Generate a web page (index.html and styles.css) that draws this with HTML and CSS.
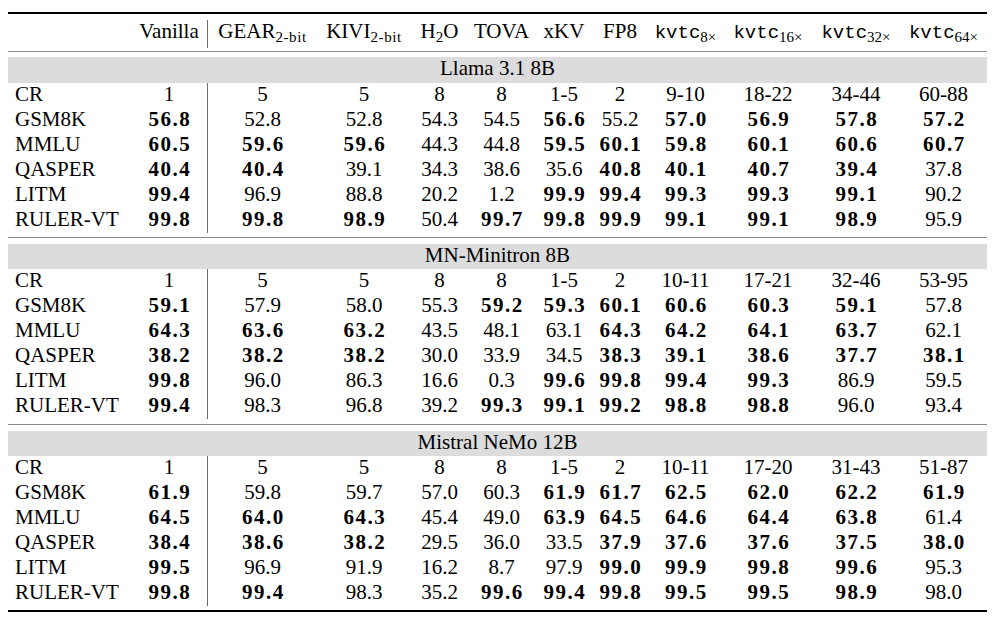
FILE: index.html
```html
<!DOCTYPE html>
<html>
<head>
<meta charset="utf-8">
<link rel="stylesheet" href="styles.css">
</head>
<body>
<table class="results">
  <colgroup>
    <col class="c-label"><col class="c-van"><col class="c-gear"><col class="c-kivi"><col class="c-h2o"><col class="c-tova"><col class="c-xkv"><col class="c-fp8"><col class="c-k8"><col class="c-k16"><col class="c-k32"><col class="c-k64">
  </colgroup>
  <thead>
    <tr class="gap g6"><td colspan="12"></td></tr>
    <tr class="head">
      <th></th>
      <th>Vanilla</th>
      <th class="sep">GEAR<sub>2-bit</sub></th>
      <th>KIVI<sub>2-bit</sub></th>
      <th>H<sub class="num">2</sub>O</th>
      <th>TOVA</th>
      <th>xKV</th>
      <th>FP8</th>
      <th><span class="tt">kvtc</span><sub class="num">8×</sub></th>
      <th><span class="tt">kvtc</span><sub class="num">16×</sub></th>
      <th><span class="tt">kvtc</span><sub class="num">32×</sub></th>
      <th><span class="tt">kvtc</span><sub class="num">64×</sub></th>
    </tr>
    <tr class="gap g3 rule"><td colspan="12"></td></tr>
  </thead>
  <tbody>
    <tr class="gap g5"><td colspan="12"></td></tr>
    <tr class="band b26"><td colspan="12">Llama 3.1 8B</td></tr>
    <tr><td class="lbl">CR</td><td>1</td><td class="sep">5</td><td>5</td><td>8</td><td>8</td><td>1-5</td><td>2</td><td>9-10</td><td>18-22</td><td>34-44</td><td>60-88</td></tr>
    <tr><td class="lbl">GSM8K</td><td class="b">56.8</td><td class="sep">52.8</td><td>52.8</td><td>54.3</td><td>54.5</td><td class="b">56.6</td><td>55.2</td><td class="b">57.0</td><td class="b">56.9</td><td class="b">57.8</td><td class="b">57.2</td></tr>
    <tr><td class="lbl">MMLU</td><td class="b">60.5</td><td class="sep b">59.6</td><td class="b">59.6</td><td>44.3</td><td>44.8</td><td class="b">59.5</td><td class="b">60.1</td><td class="b">59.8</td><td class="b">60.1</td><td class="b">60.6</td><td class="b">60.7</td></tr>
    <tr><td class="lbl">QASPER</td><td class="b">40.4</td><td class="sep b">40.4</td><td>39.1</td><td>34.3</td><td>38.6</td><td>35.6</td><td class="b">40.8</td><td class="b">40.1</td><td class="b">40.7</td><td class="b">39.4</td><td>37.8</td></tr>
    <tr><td class="lbl">LITM</td><td class="b">99.4</td><td class="sep">96.9</td><td>88.8</td><td>20.2</td><td>1.2</td><td class="b">99.9</td><td class="b">99.4</td><td class="b">99.3</td><td class="b">99.3</td><td class="b">99.1</td><td>90.2</td></tr>
    <tr><td class="lbl">RULER-VT</td><td class="b">99.8</td><td class="sep b">99.8</td><td class="b">98.9</td><td>50.4</td><td class="b">99.7</td><td class="b">99.8</td><td class="b">99.9</td><td class="b">99.1</td><td class="b">99.1</td><td class="b">98.9</td><td>95.9</td></tr>
    <tr class="gap g4 rule"><td colspan="12"></td></tr>
  </tbody>
  <tbody>
    <tr class="gap g6"><td colspan="12"></td></tr>
    <tr class="band"><td colspan="12">MN-Minitron 8B</td></tr>
    <tr><td class="lbl">CR</td><td>1</td><td class="sep">5</td><td>5</td><td>8</td><td>8</td><td>1-5</td><td>2</td><td>10-11</td><td>17-21</td><td>32-46</td><td>53-95</td></tr>
    <tr><td class="lbl">GSM8K</td><td class="b">59.1</td><td class="sep">57.9</td><td>58.0</td><td>55.3</td><td class="b">59.2</td><td class="b">59.3</td><td class="b">60.1</td><td class="b">60.6</td><td class="b">60.3</td><td class="b">59.1</td><td>57.8</td></tr>
    <tr><td class="lbl">MMLU</td><td class="b">64.3</td><td class="sep b">63.6</td><td class="b">63.2</td><td>43.5</td><td>48.1</td><td>63.1</td><td class="b">64.3</td><td class="b">64.2</td><td class="b">64.1</td><td class="b">63.7</td><td>62.1</td></tr>
    <tr><td class="lbl">QASPER</td><td class="b">38.2</td><td class="sep b">38.2</td><td class="b">38.2</td><td>30.0</td><td>33.9</td><td>34.5</td><td class="b">38.3</td><td class="b">39.1</td><td class="b">38.6</td><td class="b">37.7</td><td class="b">38.1</td></tr>
    <tr><td class="lbl">LITM</td><td class="b">99.8</td><td class="sep">96.0</td><td>86.3</td><td>16.6</td><td>0.3</td><td class="b">99.6</td><td class="b">99.8</td><td class="b">99.4</td><td class="b">99.3</td><td>86.9</td><td>59.5</td></tr>
    <tr><td class="lbl">RULER-VT</td><td class="b">99.4</td><td class="sep">98.3</td><td>96.8</td><td>39.2</td><td class="b">99.3</td><td class="b">99.1</td><td class="b">99.2</td><td class="b">98.8</td><td class="b">98.8</td><td>96.0</td><td>93.4</td></tr>
    <tr class="gap g5 rule"><td colspan="12"></td></tr>
  </tbody>
  <tbody>
    <tr class="gap g6"><td colspan="12"></td></tr>
    <tr class="band"><td colspan="12">Mistral NeMo 12B</td></tr>
    <tr><td class="lbl">CR</td><td>1</td><td class="sep">5</td><td>5</td><td>8</td><td>8</td><td>1-5</td><td>2</td><td>10-11</td><td>17-20</td><td>31-43</td><td>51-87</td></tr>
    <tr><td class="lbl">GSM8K</td><td class="b">61.9</td><td class="sep">59.8</td><td>59.7</td><td>57.0</td><td>60.3</td><td class="b">61.9</td><td class="b">61.7</td><td class="b">62.5</td><td class="b">62.0</td><td class="b">62.2</td><td class="b">61.9</td></tr>
    <tr><td class="lbl">MMLU</td><td class="b">64.5</td><td class="sep b">64.0</td><td class="b">64.3</td><td>45.4</td><td>49.0</td><td class="b">63.9</td><td class="b">64.5</td><td class="b">64.6</td><td class="b">64.4</td><td class="b">63.8</td><td>61.4</td></tr>
    <tr><td class="lbl">QASPER</td><td class="b">38.4</td><td class="sep b">38.6</td><td class="b">38.2</td><td>29.5</td><td>36.0</td><td>33.5</td><td class="b">37.9</td><td class="b">37.6</td><td class="b">37.6</td><td class="b">37.5</td><td class="b">38.0</td></tr>
    <tr><td class="lbl">LITM</td><td class="b">99.5</td><td class="sep">96.9</td><td>91.9</td><td>16.2</td><td>8.7</td><td>97.9</td><td class="b">99.0</td><td class="b">99.9</td><td class="b">99.8</td><td class="b">99.6</td><td>95.3</td></tr>
    <tr><td class="lbl">RULER-VT</td><td class="b">99.8</td><td class="sep b">99.4</td><td>98.3</td><td>35.2</td><td class="b">99.6</td><td class="b">99.4</td><td class="b">99.8</td><td class="b">99.5</td><td class="b">99.5</td><td class="b">98.9</td><td>98.0</td></tr>
    <tr class="gap g4"><td colspan="12"></td></tr>
  </tbody>
</table>
</body>
</html>
```

FILE: styles.css
```css
html, body {
  margin: 0;
  padding: 0;
  background: #fff;
}

body {
  font-family: "Liberation Serif", "Times New Roman", serif;
  color: #000;
}

.results {
  margin: 12px 0 0 8px;
  width: 979px;
  table-layout: fixed;
  border-collapse: separate;
  border-spacing: 0;
  border-top: 2px solid #000;
  border-bottom: 2px solid #000;
  font-size: 21px;
}

.results th,
.results td {
  box-sizing: border-box;
  padding: 0 0 3px 0;
  line-height: 22px;
  height: 25px;
  text-align: center;
  font-weight: normal;
  white-space: nowrap;
  vertical-align: top;
}

.c-label { width: 123px; }
.c-van { width: 76px; }
.c-gear { width: 110px; }
.c-kivi { width: 94px; }
.c-h2o { width: 57px; }
.c-tova { width: 67px; }
.c-xkv { width: 58px; }
.c-fp8 { width: 54px; }
.c-k8 { width: 77px; }
.c-k16 { width: 88px; }
.c-k32 { width: 88px; }
.c-k64 { width: 87px; }

.results tr.head th {
  height: 26px;
  padding-bottom: 4px;
}

.results .sep {
  border-left: 1px solid #6e6e6e;
}

.results td.lbl {
  text-align: left;
  padding-left: 7px;
}

.results td.b {
  font-weight: bold;
  letter-spacing: 1.5px;
  text-indent: 1.5px;
}

sub {
  font-size: 15px;
  line-height: 0;
  vertical-align: -4px;
  letter-spacing: 0.6px;
}

sub.num {
  letter-spacing: 0;
}

.tt {
  font-family: "Liberation Mono", "Courier New", monospace;
  font-size: 19px;
}

.results tr.gap td {
  padding: 0;
  font-size: 0;
  line-height: 0;
}

.results tr.g3 td { height: 3px; }
.results tr.g4 td { height: 4px; }
.results tr.g5 td { height: 5px; }
.results tr.g6 td { height: 6px; }

.results tr.rule td {
  border-bottom: 1px solid #8a8a8a;
}

.results tr.g3.rule td { height: 4px; }
.results tr.g4.rule td { height: 5px; }
.results tr.g5.rule td { height: 6px; }

.results tr.band td {
  background: #dcdcdc;
  height: 25px;
}

.results tr.band.b26 td {
  height: 26px;
  padding-bottom: 4px;
}
```
